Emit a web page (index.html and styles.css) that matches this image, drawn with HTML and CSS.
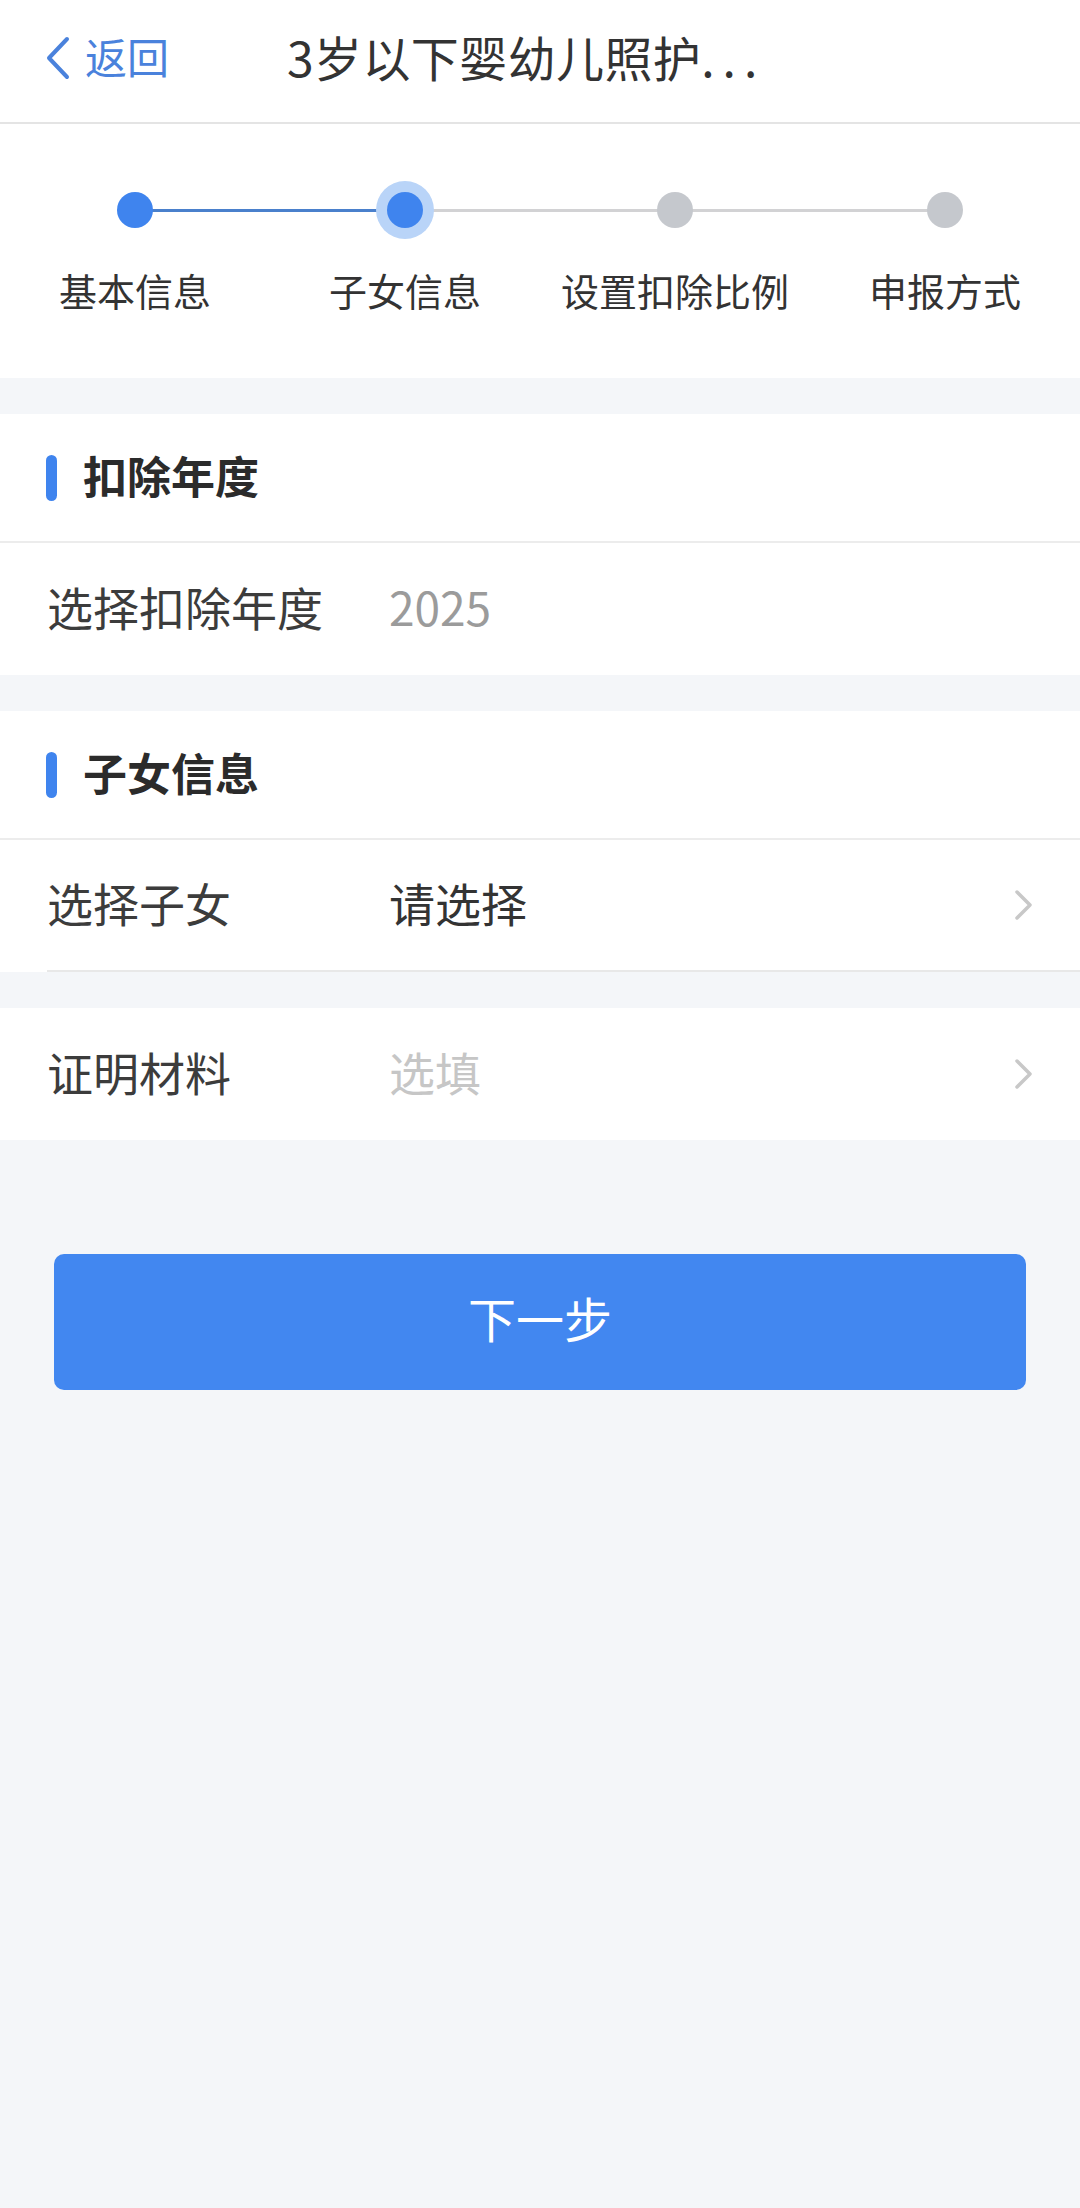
FILE: index.html
```html
<!DOCTYPE html>
<html lang="zh-CN">
<head>
<meta charset="utf-8">
<title>3岁以下婴幼儿照护</title>
<link rel="stylesheet" href="styles.css">
</head>
<body>
<header class="topbar">
  <div class="back">
    <svg class="back-icon" viewBox="0 0 26 46" width="26" height="46"><polyline points="22,4 4,23 22,42" fill="none" stroke="#4a82dc" stroke-width="4" stroke-linecap="round" stroke-linejoin="round"/></svg>
    <span class="back-text">返回</span>
  </div>
  <div class="title">3岁以下婴幼儿照护<span class="dots">...</span></div>
</header>

<section class="stepper">
  <div class="track">
    <div class="dot-cell"><span class="dot done"></span></div>
    <span class="line blue"></span>
    <div class="dot-cell"><span class="dot active"></span></div>
    <span class="line"></span>
    <div class="dot-cell"><span class="dot"></span></div>
    <span class="line"></span>
    <div class="dot-cell"><span class="dot"></span></div>
  </div>
  <div class="labels">
    <span>基本信息</span>
    <span>子女信息</span>
    <span>设置扣除比例</span>
    <span>申报方式</span>
  </div>
</section>

<section class="card">
  <div class="card-head"><span class="bar"></span><span class="head-text">扣除年度</span></div>
  <div class="row">
    <div class="row-inner">
      <span class="label">选择扣除年度</span>
      <span class="value muted">2025</span>
    </div>
  </div>
</section>

<section class="card">
  <div class="card-head"><span class="bar"></span><span class="head-text">子女信息</span></div>
  <div class="row">
    <div class="row-inner divided">
      <span class="label">选择子女</span>
      <span class="value">请选择</span>
      <svg class="chev" viewBox="0 0 20 32" width="20" height="32"><polyline points="4,3 17,16 4,29" fill="none" stroke="#c8c8c8" stroke-width="3.5" stroke-linecap="round" stroke-linejoin="round"/></svg>
    </div>
  </div>
</section>

<section class="card">
  <div class="row">
    <div class="row-inner">
      <span class="label">证明材料</span>
      <span class="value placeholder">选填</span>
      <svg class="chev" viewBox="0 0 20 32" width="20" height="32"><polyline points="4,3 17,16 4,29" fill="none" stroke="#c8c8c8" stroke-width="3.5" stroke-linecap="round" stroke-linejoin="round"/></svg>
    </div>
  </div>
</section>

<div class="actions">
  <button class="next">下一步</button>
</div>
</body>
</html>
```

FILE: styles.css
```css
* { box-sizing: border-box; }
html, body {
  margin: 0;
  padding: 0;
}
body {
  width: 1080px;
  min-height: 2208px;
  background: #f4f6f9;
  font-family: "Noto Sans CJK SC", "Noto Sans", sans-serif;
  color: #333;
}

.topbar {
  height: 124px;
  background: #fff;
  border-bottom: 2px solid #e4e4e4;
  display: flex;
  align-items: center;
  padding: 0 0 6px 45px;
}
.back {
  display: flex;
  align-items: center;
  gap: 14px;
}
.back-icon { display: block; }
.back-text {
  font-size: 42px;
  line-height: 1;
  color: #4a82dc;
  padding-bottom: 4px;
}
.title {
  margin-left: 118px;
  font-size: 48px;
  line-height: 1;
  color: #333;
  letter-spacing: 0.4px;
  padding-bottom: 5px;
}
.dots { letter-spacing: 8px; }

.stepper {
  background: #fff;
  height: 254px;
  padding-top: 57px;
}
.track {
  display: flex;
  align-items: center;
  padding: 0 106px;
  height: 58px;
}
.dot-cell {
  position: relative;
  z-index: 1;
  width: 58px;
  height: 58px;
  display: flex;
  align-items: center;
  justify-content: center;
  flex: none;
}
.dot {
  width: 36px;
  height: 36px;
  border-radius: 50%;
  background: #c5c8cd;
}
.dot.done { background: #3f84ee; }
.dot.active {
  background: #3f84ee;
  box-shadow: 0 0 0 11px #b9d4f8;
}
.line {
  flex: 1;
  height: 3px;
  margin: 0 -12px;
  background: #d2d2d4;
}
.line.blue { background: #4a80cc; }

.labels {
  display: grid;
  grid-template-columns: repeat(4, 270px);
  margin-top: 26px;
}
.labels span {
  text-align: center;
  font-size: 38px;
  line-height: 50px;
  color: #333;
}

.card {
  background: #fff;
  margin-top: 36px;
}
.card-head {
  height: 129px;
  border-bottom: 2px solid #ececec;
  display: flex;
  align-items: center;
  padding-left: 46px;
  gap: 26px;
}
.bar {
  width: 11px;
  height: 46px;
  border-radius: 6px;
  background: #3f84ee;
}
.head-text {
  font-size: 44px;
  font-weight: 700;
  line-height: 1;
  color: #2b2b2b;
  padding-bottom: 6px;
}

.row {
  padding-left: 47px;
}
.row-inner {
  height: 132px;
  display: flex;
  align-items: center;
  padding-right: 47px;
}
.row-inner.divided {
  border-bottom: 2px solid #e8e8e8;
  height: 132px;
}
.label {
  width: 342px;
  flex: none;
  font-size: 46px;
  line-height: 1;
  color: #3c3c3c;
  padding-bottom: 6px;
}
.value {
  flex: 1;
  font-size: 46px;
  line-height: 1;
  color: #333;
  padding-bottom: 6px;
}
.value.muted { color: #9b9b9b; }
.value.placeholder { color: #c6c6c6; }
.chev { display: block; flex: none; }

.actions {
  padding: 114px 54px 0;
}
.next {
  display: block;
  width: 100%;
  height: 136px;
  border: none;
  border-radius: 10px;
  background: #4287f0;
  color: #fff;
  font-family: "Noto Sans CJK SC", "Noto Sans", sans-serif;
  font-size: 48px;
  line-height: 1;
  padding: 0 0 10px;
}
```
